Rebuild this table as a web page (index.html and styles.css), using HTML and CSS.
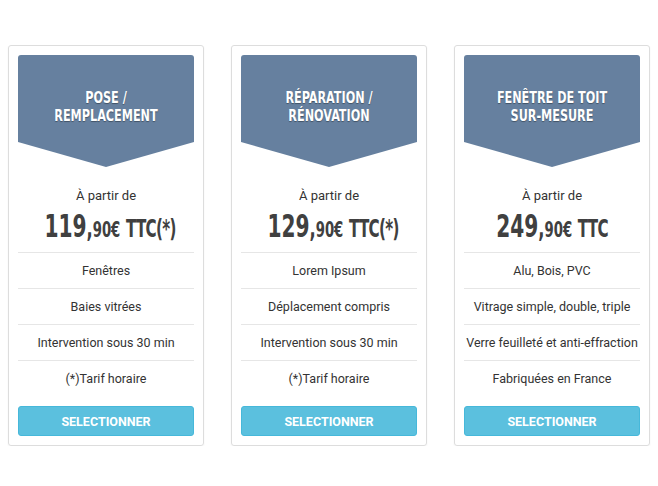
FILE: index.html
```html
<!DOCTYPE html>
<html lang="fr">
<head>
    <meta charset="UTF-8">
    <meta name="viewport" content="width=device-width, initial-scale=1.0">
    <title>Tarifs</title>
    <link rel="stylesheet" href="styles.css">
</head>
<body>
    <div class="pricing">
        <div class="plan">
            <div class="plan-head">
                <h2>Pose /<br>Remplacement</h2>
            </div>
            <p class="from">À partir de</p>
            <p class="price"><span class="int">119</span>,<span class="dec">90€</span> <span class="tax">TTC(*)</span></p>
            <ul class="features">
                <li>Fenêtres</li>
                <li>Baies vitrées</li>
                <li>Intervention sous 30 min</li>
                <li>(*)Tarif horaire</li>
            </ul>
            <button class="btn">Selectionner</button>
        </div>
        <div class="plan">
            <div class="plan-head">
                <h2>Réparation /<br>Rénovation</h2>
            </div>
            <p class="from">À partir de</p>
            <p class="price"><span class="int">129</span>,<span class="dec">90€</span> <span class="tax">TTC(*)</span></p>
            <ul class="features">
                <li>Lorem Ipsum</li>
                <li>Déplacement compris</li>
                <li>Intervention sous 30 min</li>
                <li>(*)Tarif horaire</li>
            </ul>
            <button class="btn">Selectionner</button>
        </div>
        <div class="plan">
            <div class="plan-head">
                <h2>Fenêtre de toit<br>sur-mesure</h2>
            </div>
            <p class="from">À partir de</p>
            <p class="price"><span class="int">249</span>,<span class="dec">90€</span> <span class="tax">TTC</span></p>
            <ul class="features">
                <li>Alu, Bois, PVC</li>
                <li>Vitrage simple, double, triple</li>
                <li>Verre feuilleté et anti-effraction</li>
                <li>Fabriquées en France</li>
            </ul>
            <button class="btn">Selectionner</button>
        </div>
    </div>
</body>
</html>
```

FILE: styles.css
```css
:root {
    --head-color: #66809f;
    --btn-color: #5bc0de;
    --btn-border: #46b8da;
    --text-color: #333;
    --line-color: #e6e6e6;
}

body {
    margin: 0;
    background: #fff;
    font-family: Roboto, 'Liberation Sans', sans-serif;
    color: var(--text-color);
}

.pricing {
    display: flex;
    gap: 27px;
    padding: 45px 0 0 8px;
}

.plan {
    width: 196px;
    box-sizing: border-box;
    border: 1px solid #ddd;
    border-radius: 3px;
    padding: 9px;
    display: flex;
    flex-direction: column;
    text-align: center;
    box-shadow: 0 1px 2px rgba(0, 0, 0, 0.05);
}

.plan-head {
    height: 112px;
    background: var(--head-color);
    border-radius: 3px 3px 0 0;
    clip-path: polygon(0 0, 100% 0, 100% 87px, 50% 100%, 0 87px);
    display: flex;
    align-items: center;
    justify-content: center;
    padding-bottom: 8px;
    box-sizing: border-box;
}

.plan-head h2 {
    margin: 0;
    width: 100%;
    color: #fff;
    font-family: 'DejaVu Sans Condensed', 'DejaVu Sans', sans-serif;
    font-weight: bold;
    font-size: 16px;
    line-height: 18px;
    text-transform: uppercase;
    white-space: nowrap;
    transform: scaleX(0.78);
    text-shadow: 0 1px 1px rgba(0, 0, 0, 0.35);
}

.from {
    margin: 19px 0 0;
    font-size: 13px;
    line-height: 20px;
}

.price {
    margin: 0;
    padding-bottom: 2px;
    font-family: 'DejaVu Sans Condensed', 'DejaVu Sans', sans-serif;
    font-weight: bold;
    font-size: 26px;
    line-height: 40px;
    color: #404040;
    white-space: nowrap;
    transform: scaleX(0.7);
}

.price .int {
    font-size: 32px;
}

.price .dec {
    font-size: 21px;
}

.price .tax {
    font-size: 24px;
    letter-spacing: -1px;
}

.features {
    list-style: none;
    margin: 0;
    padding: 0;
}

.features li {
    border-top: 1px solid var(--line-color);
    font-size: 12.5px;
    line-height: 35px;
    white-space: nowrap;
}

.btn {
    margin-top: 10px;
    height: 30px;
    background: var(--btn-color);
    border: 1px solid var(--btn-border);
    border-radius: 3px;
    color: #fff;
    font-family: Roboto, 'Liberation Sans', sans-serif;
    font-weight: bold;
    font-size: 12.5px;
    text-transform: uppercase;
    cursor: pointer;
}
```
